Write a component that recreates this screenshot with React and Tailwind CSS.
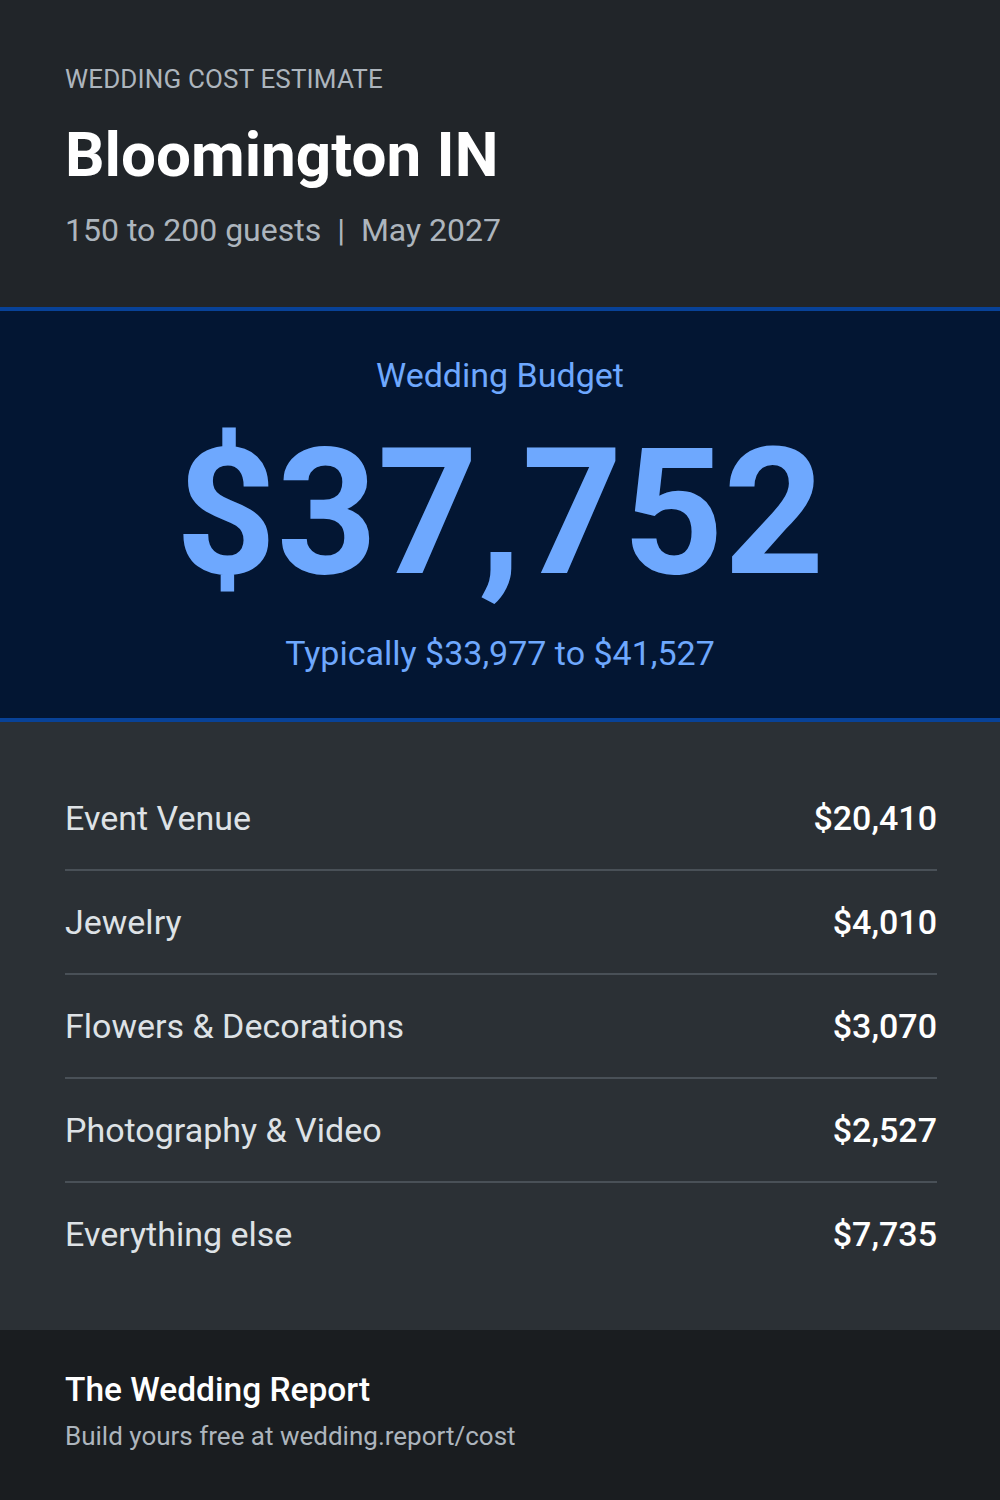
const rows = [
  { label: 'Event Venue', value: '$20,410' },
  { label: 'Jewelry', value: '$4,010' },
  { label: 'Flowers & Decorations', value: '$3,070' },
  { label: 'Photography & Video', value: '$2,527' },
  { label: 'Everything else', value: '$7,735' },
];

export default function App() {
  return (
    <div className="w-[1000px] min-h-[1500px] bg-[#1a1d20] font-['Roboto',sans-serif]">
      {/* header */}
      <div className="px-[65px] pt-[66px] pb-[61px] bg-[#212529]">
        <p className="text-[26px] leading-none tracking-[0.15px] text-[#adb5bd] uppercase">Wedding Cost Estimate</p>
        <h1 className="mt-[32px] text-[62px] leading-none font-bold text-white">Bloomington IN</h1>
        <p className="mt-[28px] text-[32px] leading-none text-[#adb5bd]">
          150 to 200 guests <span className="mx-[8px]">|</span> May 2027
        </p>
      </div>

      {/* budget */}
      <div className="border-y-4 border-[#084298] bg-[#031633] pt-[47px] pb-[48px] text-center text-[#6ea8fe]">
        <p className="text-[34px] leading-none">Wedding Budget</p>
        <p className="mt-[33px] text-[176px] leading-none font-bold">$37,752</p>
        <p className="mt-[35px] text-[34px] leading-none">Typically $33,977 to $41,527</p>
      </div>

      {/* breakdown */}
      <div className="bg-[#2b3035] pl-[65px] pr-[63px] pt-[45px] pb-[45px]">
        {rows.map((r, i) => (
          <div
            key={r.label}
            className={`flex items-center justify-between h-[102px] ${i < rows.length - 1 ? 'border-b-2 border-[#495057] h-[104px]' : ''}`}
          >
            <span className="text-[34px] leading-none text-[#dee2e6]">{r.label}</span>
            <span className="text-[34px] leading-none font-medium text-white">{r.value}</span>
          </div>
        ))}
      </div>

      {/* footer */}
      <div className="px-[65px] pt-[43px] pb-[51px] bg-[#1a1d20]">
        <p className="text-[33.5px] leading-none font-medium text-white">The Wedding Report</p>
        <p className="mt-[16px] text-[26px] leading-none text-[#adb5bd]">Build yours free at wedding.report/cost</p>
      </div>
    </div>
  );
}
